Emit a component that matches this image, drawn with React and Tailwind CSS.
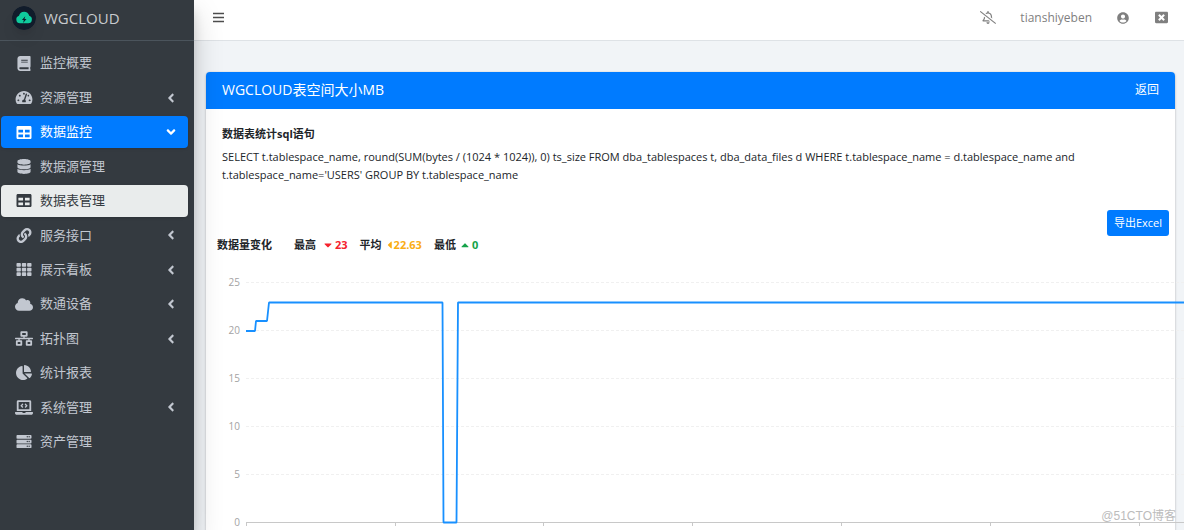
import React from 'react';
import {
  FaBook, FaTachometerAlt, FaTable, FaDatabase, FaLink, FaTh, FaCloud, FaNetworkWired,
  FaChartPie, FaLaptopCode, FaServer, FaAngleLeft, FaAngleDown, FaRegBellSlash,
  FaUserCircle, FaWindowClose, FaCaretDown, FaCaretLeft, FaCaretUp,
} from 'react-icons/fa';

const menu = [
  { label: '监控概要', icon: FaBook },
  { label: '资源管理', icon: FaTachometerAlt, arrow: true },
  { label: '数据监控', icon: FaTable, arrow: true, state: 'open' },
  { label: '数据源管理', icon: FaDatabase },
  { label: '数据表管理', icon: FaTable, state: 'current' },
  { label: '服务接口', icon: FaLink, arrow: true },
  { label: '展示看板', icon: FaTh, arrow: true },
  { label: '数通设备', icon: FaCloud, arrow: true },
  { label: '拓扑图', icon: FaNetworkWired, arrow: true },
  { label: '统计报表', icon: FaChartPie },
  { label: '系统管理', icon: FaLaptopCode, arrow: true },
  { label: '资产管理', icon: FaServer },
];

const itemStyles = {
  open: 'bg-[#007bff] text-white shadow',
  current: 'bg-[#e9ecec] text-[#343a40] shadow',
  normal: 'text-[#c2c7d0]',
};

function Logo() {
  return (
    <svg viewBox="0 0 24 24" className="size-6 rounded-full shadow-lg" aria-hidden="true">
      <circle cx="12" cy="12" r="12" fill="#111c2b" />
      <path
        d="M8 17.3a3.9 3.9 0 0 1-1-7.6 5.3 5.3 0 0 1 10.2 0 3.9 3.9 0 0 1-1 7.6z"
        fill="#0fcb9d"
      />
      <path d="M13.3 10.2l-3.4 3.8h1.9l-.7 3 3.4-4h-2z" fill="#111c2b" />
    </svg>
  );
}

function Sidebar() {
  return (
    <aside className="relative z-10 w-[194px] shrink-0 bg-[#343a40] shadow-[0_14px_28px_rgba(0,0,0,0.18),0_10px_10px_rgba(0,0,0,0.12)]">
      <a href="#home" className="flex h-[41px] items-center gap-2 border-b border-[#4b545c] pb-1 pl-3 text-[15px] text-[#c8cbce]">
        <Logo />
        WGCLOUD
      </a>
      <nav className="pt-[5px] pr-[6px] pl-px">
        <ul className="grid h-[413px] auto-rows-fr">
          {menu.map(({ label, icon: Icon, arrow, state }) => (
            <li key={label} className="flex items-center">
              <a
                href={'#' + label}
                className={'flex h-8 w-full items-center rounded pr-[10px] pl-[13px] text-[13px] ' + itemStyles[state || 'normal']}
              >
                <span className="mr-[6px] flex w-5 shrink-0 justify-center">
                  <Icon className="h-[15px] w-[18px]" />
                </span>
                <span className="flex-1">{label}</span>
                {arrow && (state === 'open' ? <FaAngleDown className="size-[14px]" /> : <FaAngleLeft className="size-[14px]" />)}
              </a>
            </li>
          ))}
        </ul>
      </nav>
    </aside>
  );
}

function Topbar() {
  return (
    <header className="flex h-[41px] shrink-0 items-center border-b border-[#dee2e6] bg-white px-4 pb-[5px] text-xs text-[#7f7f7f]">
      <button type="button" aria-label="菜单" className="mr-auto ml-[2px] text-[#4d4d4d]">
        <svg viewBox="0 0 13 13" className="size-[13px]" fill="none" stroke="currentColor" strokeWidth="1.6" aria-hidden="true">
          <path d="M1 2.5h11M1 6.5h11M1 10.5h11" />
        </svg>
      </button>
      <button type="button" aria-label="通知" className="mr-6">
        <FaRegBellSlash className="h-[13px] w-4" />
      </button>
      <a href="#user" className="mr-[25px]">tianshiyeben</a>
      <button type="button" aria-label="账户" className="mr-[26px]">
        <FaUserCircle className="size-3" />
      </button>
      <button type="button" aria-label="关闭">
        <FaWindowClose className="size-[13px]" />
      </button>
    </header>
  );
}

const gridY = [
  [25, 13], [20, 61], [15, 109], [10, 157], [5, 205], [0, 253],
];
const ticks = [37, 186, 334, 483, 632, 781, 930];

function Chart() {
  return (
    <svg width="1040" height="300" className="block shrink-0 text-[10px]" role="img" aria-label="数据量变化">
      {gridY.map(([value, y]) => (
        <g key={value}>
          <text x="31" y={y + 3} textAnchor="end" fill="#a3a3a3">{value}</text>
          {value > 0 && (
            <line x1="37" x2="1040" y1={y - 0.5} y2={y - 0.5} stroke="#f0f0f0" strokeDasharray="3 2" />
          )}
        </g>
      ))}
      <line x1="37" x2="1040" y1="252.5" y2="252.5" stroke="#c8c8c8" />
      {ticks.map((x) => (
        <line key={x} x1={x + 0.5} x2={x + 0.5} y1="252" y2="256" stroke="#c8c8c8" />
      ))}
      <polyline
        points="37,61 46,61 47,51 58,51 60,32.5 233.5,32.5 234.5,252.5 247.5,252.5 249,32.5 1040,32.5"
        fill="none"
        stroke="#1890ff"
        strokeWidth="1.8"
        strokeLinejoin="bevel"
      />
    </svg>
  );
}

function Card() {
  return (
    <section className="mx-3 mt-[31px] mr-[9px] min-h-[600px] rounded bg-white text-[11px] text-[#212529] shadow-[0_0_1px_rgba(0,0,0,0.2),0_1px_3px_rgba(0,0,0,0.2)]">
      <div className="flex h-[37px] items-center justify-between rounded-t bg-[#007bff] px-4 pb-px text-white">
        <h1 className="text-sm">WGCLOUD表空间大小MB</h1>
        <a href="#back" className="text-xs">返回</a>
      </div>
      <div className="px-4 pt-4 leading-[18px]">
        <h2 className="font-bold">数据表统计sql语句</h2>
        <p className="mt-[5px] pr-10">
          SELECT t.tablespace_name, round(SUM(bytes / (1024 * 1024)), 0) ts_size FROM dba_tablespaces t, dba_data_files d WHERE t.tablespace_name = d.tablespace_name and t.tablespace_name='USERS' GROUP BY t.tablespace_name
        </p>
      </div>
      <div className="mt-[26px] flex justify-end pr-[6px]">
        <button type="button" className="h-[26px] rounded-[3px] bg-[#007bff] px-[7px] text-white">
          导出Excel
        </button>
      </div>
      <div className="flex items-center pl-[11px] leading-[18px] font-bold">
        <span className="mr-[22px]">数据量变化</span>
        <span className="mr-2">最高</span>
        <span className="mr-3 flex items-center gap-[3px] text-[#f5222d]"><FaCaretDown className="h-3 w-2" />23</span>
        <span className="mr-[5px]">平均</span>
        <span className="mr-3 flex items-center gap-[2px] text-[#faad14]"><FaCaretLeft className="h-3 w-[5px]" />22.63</span>
        <span className="mr-[5px]">最低</span>
        <span className="flex items-center gap-[3px] text-[#16a34a]"><FaCaretUp className="h-3 w-2" />0</span>
      </div>
      <div className="flex pt-4 pl-[3px]">
        <div className="w-0">
          <Chart />
        </div>
      </div>
    </section>
  );
}

export default function App() {
  return (
    <div className="relative flex h-screen overflow-hidden bg-[#f1f4f7] font-['Open_Sans','Noto_Sans_CJK_SC',sans-serif]">
      <Sidebar />
      <main className="flex min-w-0 flex-1 flex-col overflow-hidden">
        <Topbar />
        <div className="min-h-0 flex-1 overflow-hidden">
          <Card />
        </div>
      </main>
      <span className="absolute right-2 bottom-[5px] font-['Liberation_Sans','Noto_Sans_CJK_SC',sans-serif] text-xs leading-[18px] text-[#bcbcbc]">
        @51CTO博客
      </span>
    </div>
  );
}
